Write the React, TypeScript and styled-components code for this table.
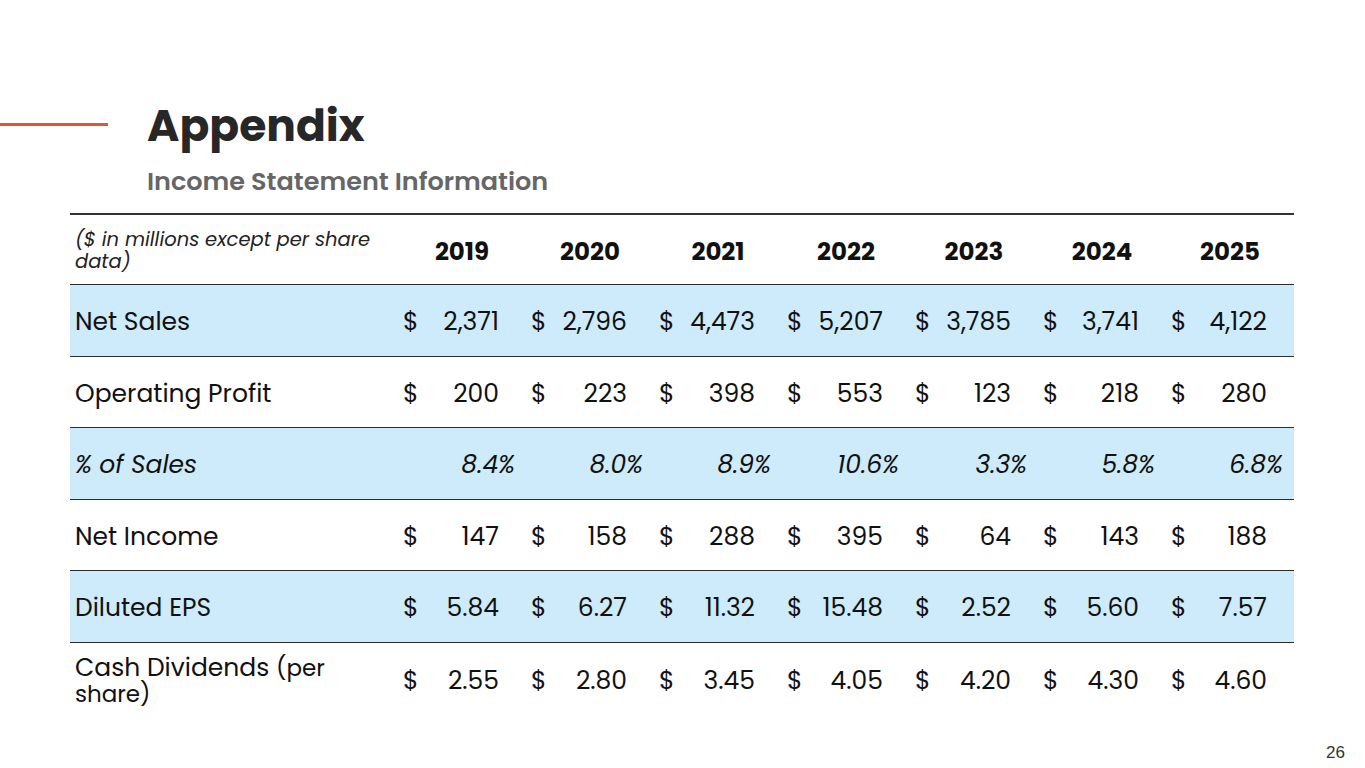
import React from 'react';
import styled, { createGlobalStyle } from 'styled-components';

const GlobalStyle = createGlobalStyle`
  *, *::before, *::after {
    box-sizing: border-box;
  }
  html, body {
    margin: 0;
    padding: 0;
    background: #ffffff;
  }
  body {
    font-family: 'Poppins', Inter, 'Noto Sans', sans-serif;
    color: #111111;
  }
`;

const Slide = styled.div`
  position: relative;
  width: 1365px;
  height: 768px;
  overflow: hidden;
  background: #ffffff;
`;

const Header = styled.div`
  display: flex;
  align-items: flex-start;
  padding-top: 98px;
`;

const Accent = styled.div`
  width: 108px;
  height: 3px;
  margin-top: 25px;
  margin-right: 39px;
  background: #e4572e;
`;

const Titles = styled.div`
  display: flex;
  flex-direction: column;
`;

const Title = styled.h1`
  margin: 0;
  font-size: 44px;
  line-height: 56px;
  font-weight: 700;
  color: #272727;
`;

const Subtitle = styled.h2`
  margin: 0;
  margin-top: 11px;
  font-size: 25.5px;
  line-height: 32px;
  font-weight: 600;
  color: #666666;
`;

const Table = styled.div`
  display: grid;
  grid-template-columns: 328px repeat(7, 128px);
  width: 1224px;
  margin: 16px 0 0 70px;
  border-top: 2px solid #333333;
`;

const Row = styled.div<{ $shaded?: boolean; $last?: boolean; $head?: boolean }>`
  display: contents;
  & > div {
    height: ${(p) => (p.$head ? '70px' : p.$last ? '72px' : '71.5px')};
    padding-top: ${(p) => (p.$head ? '3px' : '4px')};
    background: ${(p) => (p.$shaded ? '#cdebfb' : 'transparent')};
    border-bottom: ${(p) => (p.$last ? 'none' : '1.5px solid #2b2b2b')};
  }
`;

const LabelCell = styled.div<{ $italic?: boolean }>`
  display: flex;
  align-items: center;
  padding-left: 5px;
  padding-right: 20px;
  font-size: 25px;
  line-height: 26px;
  font-style: ${(p) => (p.$italic ? 'italic' : 'normal')};
  color: #111111;
`;

const NoteLabel = styled(LabelCell)`
  font-size: 19.5px;
  line-height: 22px;
  font-style: italic;
  color: #222222;
`;

const Small = styled.span`
  font-size: 23px;
  line-height: 24px;
`;

const YearCell = styled.div`
  display: flex;
  align-items: center;
  justify-content: center;
  font-size: 24.5px;
  font-weight: 700;
  color: #111111;
`;

const MoneyCell = styled.div`
  display: flex;
  align-items: center;
  justify-content: space-between;
  padding-left: 5px;
  padding-right: 27px;
  font-size: 25px;
  color: #111111;
`;

const PercentCell = styled.div`
  display: flex;
  align-items: center;
  justify-content: flex-end;
  padding-right: 11px;
  font-size: 25px;
  font-style: italic;
  color: #111111;
`;

const PageNumber = styled.div`
  position: absolute;
  right: 20px;
  bottom: 5px;
  font-family: 'Liberation Sans', Arial, sans-serif;
  font-size: 17px;
  color: #333333;
`;

const years = ['2019', '2020', '2021', '2022', '2023', '2024', '2025'];

type DataRow = {
  label: React.ReactNode;
  values: string[];
  kind: 'money' | 'percent';
  shaded: boolean;
};

const rows: DataRow[] = [
  { label: 'Net Sales', values: ['2,371', '2,796', '4,473', '5,207', '3,785', '3,741', '4,122'], kind: 'money', shaded: true },
  { label: 'Operating Profit', values: ['200', '223', '398', '553', '123', '218', '280'], kind: 'money', shaded: false },
  { label: '% of Sales', values: ['8.4%', '8.0%', '8.9%', '10.6%', '3.3%', '5.8%', '6.8%'], kind: 'percent', shaded: true },
  { label: 'Net Income', values: ['147', '158', '288', '395', '64', '143', '188'], kind: 'money', shaded: false },
  { label: 'Diluted EPS', values: ['5.84', '6.27', '11.32', '15.48', '2.52', '5.60', '7.57'], kind: 'money', shaded: true },
  {
    label: (
      <span>
        Cash Dividends <Small>(per share)</Small>
      </span>
    ),
    values: ['2.55', '2.80', '3.45', '4.05', '4.20', '4.30', '4.60'],
    kind: 'money',
    shaded: false,
  },
];

export default function App() {
  return (
    <Slide>
      <GlobalStyle />
      <Header>
        <Accent />
        <Titles>
          <Title>Appendix</Title>
          <Subtitle>Income Statement Information</Subtitle>
        </Titles>
      </Header>
      <Table>
        <Row $head>
          <NoteLabel>($ in millions except per share data)</NoteLabel>
          {years.map((y) => (
            <YearCell key={y}>{y}</YearCell>
          ))}
        </Row>
        {rows.map((r, i) => (
          <Row key={i} $shaded={r.shaded} $last={i === rows.length - 1}>
            <LabelCell $italic={r.kind === 'percent'}>{r.label}</LabelCell>
            {r.values.map((v, j) =>
              r.kind === 'money' ? (
                <MoneyCell key={j}>
                  <span>$</span>
                  <span>{v}</span>
                </MoneyCell>
              ) : (
                <PercentCell key={j}>{v}</PercentCell>
              )
            )}
          </Row>
        ))}
      </Table>
      <PageNumber>26</PageNumber>
    </Slide>
  );
}
